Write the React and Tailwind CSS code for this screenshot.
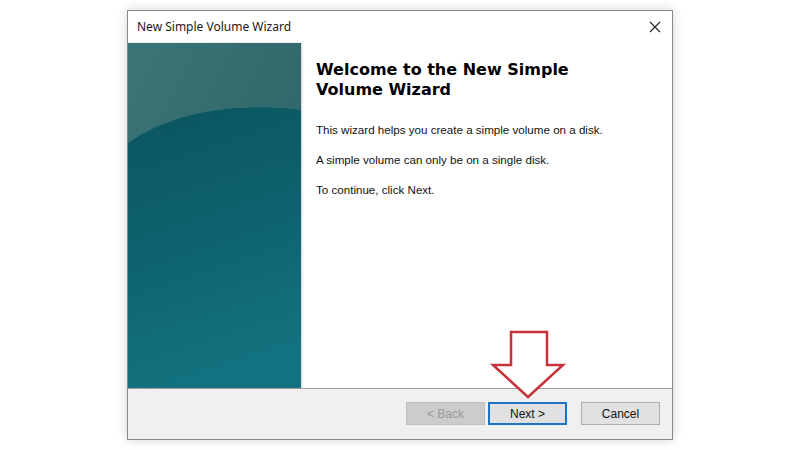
export default function App() {
    return (
        <div className="relative w-[800px] h-[450px] bg-white overflow-hidden" style={{ fontFamily: '"Liberation Sans", Arial, sans-serif' }}>
            <div className="pt-[10px] pl-[127px]">
                <div className="w-[546px] h-[430px] border border-[#8a8a8a] bg-white flex flex-col shadow-[0_0_10px_rgba(0,0,0,0.18)]">
                    {/* title bar */}
                    <div className="h-[32px] flex items-center justify-between pl-[9px] pr-[10px] shrink-0">
                        <span className="text-[12px] text-[#1a1a1a]" style={{ fontFamily: '"Noto Sans", "Open Sans", sans-serif' }}>New Simple Volume Wizard</span>
                        <svg width="12" height="12" viewBox="0 0 12 12" className="mr-[1px]">
                            <path d="M1 1 L11 11 M11 1 L1 11" stroke="#222" strokeWidth="1.1" fill="none" />
                        </svg>
                    </div>

                    {/* body */}
                    <div className="flex h-[345px] shrink-0">
                        <div className="w-[173px] h-full shrink-0 shadow-[1px_0_2px_rgba(0,0,0,0.2)]">
                            <svg width="173" height="345" viewBox="0 0 173 345" preserveAspectRatio="none" className="block">
                                <defs>
                                    <linearGradient id="topg" x1="0" y1="0" x2="1" y2="1">
                                        <stop offset="0" stopColor="#3c7575" />
                                        <stop offset="1" stopColor="#285f64" />
                                    </linearGradient>
                                    <linearGradient id="botg" x1="0" y1="0" x2="0.2" y2="1">
                                        <stop offset="0" stopColor="#0a5560" />
                                        <stop offset="0.5" stopColor="#0e616e" />
                                        <stop offset="1" stopColor="#13727f" />
                                    </linearGradient>
                                </defs>
                                <rect width="173" height="345" fill="url(#topg)" />
                                <path d="M0 100 C 30 78, 75 64, 130 64 C 150 64, 165 65, 173 67 L173 345 L0 345 Z" fill="url(#botg)" />
                                <path d="M0 100 C 30 78, 75 64, 130 64 C 150 64, 165 65, 173 67" stroke="#3b767a" strokeWidth="1" fill="none" opacity="0.5" />
                            </svg>
                        </div>
                        <div className="flex-1 pl-[15px] pt-[17px]">
                            <h1 className="text-[16px] leading-[20px] font-bold text-black" style={{ fontFamily: '"DejaVu Sans", Verdana, sans-serif' }}>
                                Welcome to the New Simple<br />Volume Wizard
                            </h1>
                            <div className="mt-[23px] text-[11.6px] text-[#111] flex flex-col gap-[16px] leading-[14px]">
                                <p>This wizard helps you create a simple volume on a disk.</p>
                                <p>A simple volume can only be on a single disk.</p>
                                <p>To continue, click Next.</p>
                            </div>
                        </div>
                    </div>

                    {/* button bar */}
                    <div className="flex-1 bg-[#f0f0f0] border-t border-[#a0a0a0] flex items-center justify-end pr-[12px] pb-[1px]">
                        <button className="w-[79px] h-[23px] border border-[#bfbfbf] bg-[#cccccc] text-[12px] text-[#9a9a9a]">&lt; Back</button>
                        <button className="ml-[3px] w-[79px] h-[23px] border-2 border-[#1b74c0] bg-[#e1e1e1] text-[12px] text-[#111]">Next &gt;</button>
                        <button className="ml-[14px] w-[79px] h-[23px] border border-[#adadad] bg-[#e1e1e1] text-[12px] text-[#111]">Cancel</button>
                    </div>
                </div>
            </div>

            {/* red arrow overlay */}
            <svg className="absolute left-[488px] top-[329px]" width="80" height="72" viewBox="0 0 80 72">
                <path d="M23 3 L59 3 L59 36 L75 36 L40 68 L5 36 L23 36 Z" fill="white" stroke="#c8323a" strokeWidth="2.5" strokeLinejoin="miter" />
            </svg>
        </div>
    );
}
